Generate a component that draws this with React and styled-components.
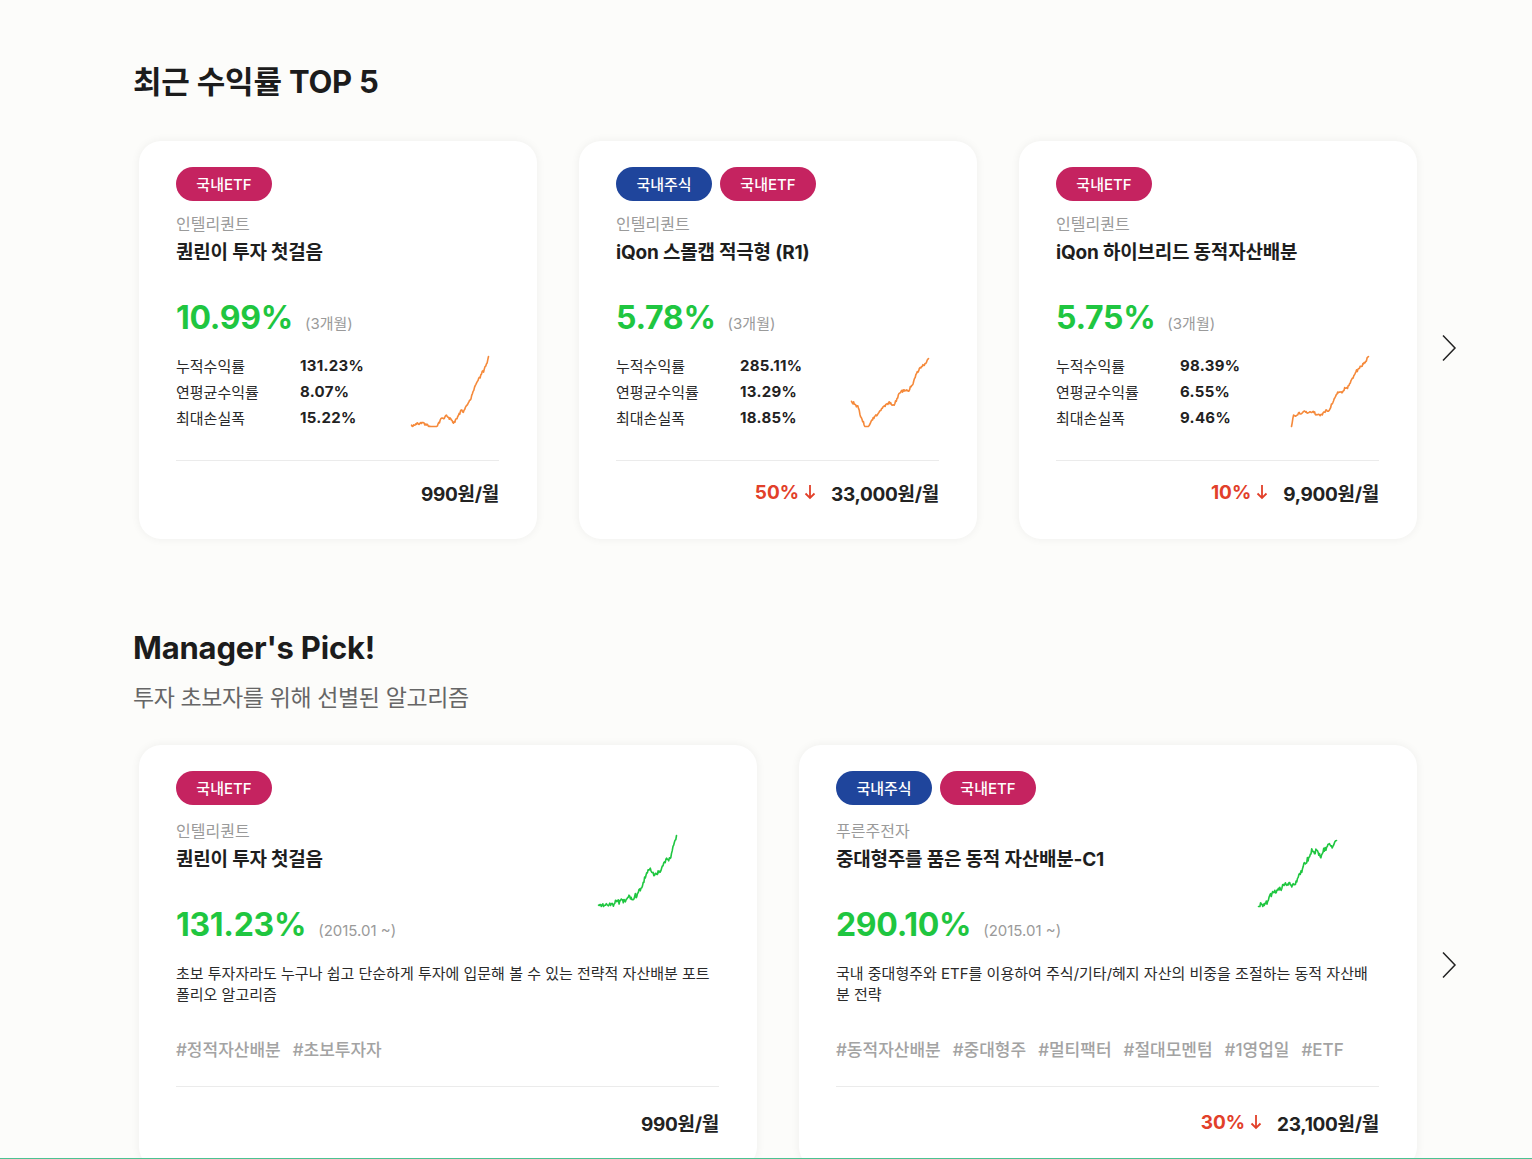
import React from 'react';
import styled, { createGlobalStyle } from 'styled-components';

const GREEN = '#1fc640';
const ORANGE = '#f5893a';
const RED = '#e2402a';

const GlobalStyle = createGlobalStyle`
  body {
    margin: 0;
    background: #fcfcfa;
    font-family: Inter, "Noto Sans CJK KR", sans-serif;
    color: #222;
  }
`;

const Page = styled.main`
  padding: 64px 0 0 133px;
`;

const SectionTitle = styled.h2`
  margin: ${(p) => p.$top || 0}px 0 0;
  font-size: 31px;
  line-height: 36px;
  font-weight: 700;
  color: #1c1c1c;
  letter-spacing: -0.2px;
`;

const SectionSub = styled.p`
  margin: 17px 0 0;
  font-size: 23px;
  line-height: 30px;
  color: #666;
  letter-spacing: -0.4px;
`;

const CarouselRow = styled.div`
  display: flex;
  align-items: center;
  margin-top: ${(p) => p.$top}px;
  padding-left: 6px;
`;

const CardList = styled.div`
  display: flex;
  gap: 42px;
`;

const Card = styled.div`
  box-sizing: border-box;
  width: ${(p) => p.$width}px;
  background: #fff;
  border-radius: 22px;
  box-shadow: 0 0 10px rgba(0, 0, 0, 0.06);
  padding: 26px 38px 33px 37px;
  display: flex;
  flex-direction: column;
`;

const NextButton = styled.button`
  margin: 16px 0 0 24px;
  padding: 0;
  border: 0;
  background: none;
  width: 16px;
  height: 28px;
  display: flex;
  cursor: pointer;
`;

const BadgeRow = styled.div`
  display: flex;
  gap: 8px;
`;

const Badge = styled.span`
  box-sizing: border-box;
  width: 96px;
  height: 34px;
  padding-bottom: 2px;
  border-radius: 17px;
  background: ${(p) => (p.$kind === 'stock' ? '#1f459c' : '#c52360')};
  color: #fff;
  font-size: 15px;
  font-weight: 500;
  display: flex;
  align-items: center;
  justify-content: center;
`;

const Company = styled.div`
  margin-top: ${(p) => p.$top || 12}px;
  font-size: 16px;
  line-height: 22px;
  color: #9a9a9a;
`;

const Title = styled.div`
  margin-top: 5px;
  font-size: 19px;
  line-height: 26px;
  font-weight: 700;
  color: #1e1e1e;
  letter-spacing: -0.2px;
`;

const ReturnLine = styled.div`
  margin-top: 32px;
  display: flex;
  align-items: baseline;
  gap: 12px;
`;

const Rate = styled.span`
  font-size: 32px;
  line-height: 40px;
  font-weight: 700;
  color: ${GREEN};
  letter-spacing: -0.3px;
`;

const Period = styled.span`
  font-size: 15px;
  color: #9a9a9a;
`;

const StatsRow = styled.div`
  margin-top: 14px;
  display: flex;
  justify-content: space-between;
  align-items: flex-end;
`;

const StatsTable = styled.div`
  display: grid;
  grid-template-columns: 124px auto;
  grid-auto-rows: 26px;
  align-items: center;
`;

const StatLabel = styled.span`
  font-size: 15px;
  color: #2a2a2a;
`;

const StatValue = styled.span`
  font-size: 15px;
  font-weight: 700;
  color: #222;
  letter-spacing: 0.3px;
`;

const ChartBox = styled.svg`
  display: block;
  flex: none;
  margin: ${(p) => p.$margin};
`;

const Divider = styled.div`
  margin-top: ${(p) => p.$top}px;
  height: 1px;
  background: #ebebeb;
`;

const PriceRow = styled.div`
  margin-top: ${(p) => p.$top}px;
  display: flex;
  justify-content: flex-end;
  align-items: center;
  gap: 15px;
  height: 28px;
`;

const Discount = styled.span`
  display: flex;
  align-items: center;
  gap: 5px;
  font-size: 19px;
  font-weight: 700;
  color: ${RED};
`;

const Price = styled.span`
  font-size: 19px;
  font-weight: 700;
  color: #222;
  letter-spacing: -0.3px;
`;

const HeaderRow = styled.div`
  display: flex;
  justify-content: space-between;
  align-items: flex-start;
`;

const HeaderText = styled.div`
  display: flex;
  flex-direction: column;
`;

const Description = styled.p`
  margin: 18px 0 0;
  font-size: 15px;
  line-height: 21px;
  color: #2a2a2a;
  word-break: break-all;
`;

const TagRow = styled.div`
  margin-top: 34px;
  display: flex;
  gap: 12px;
  font-size: 17px;
  line-height: 22px;
  color: #a3a3a3;
  font-weight: 500;
`;

const FooterLine = styled.div`
  position: fixed;
  left: 0;
  right: 0;
  bottom: 0;
  height: 1px;
  background: #4cc392;
`;

// seeded random walk bent through anchor points
const seeded = (s) => () => {
  s = (s * 16807) % 2147483647;
  return (s - 1) / 2147483646;
};

function buildPath(anchors, seed, w, h, amp, jitter, n = 110) {
  const r = seeded(seed);
  const walk = [0];
  for (let i = 1; i <= n; i++) walk.push(walk[i - 1] + (r() - 0.5) * amp);
  const pad = 1.5;
  const pts = [];
  for (let i = 0; i <= n; i++) {
    const t = i / n;
    let k = 0;
    while (k < anchors.length - 2 && anchors[k + 1][0] < t) k++;
    const [t0, v0] = anchors[k];
    const [t1, v1] = anchors[k + 1];
    const base = v0 + (v1 - v0) * ((t - t0) / (t1 - t0));
    const edge = i === 0 || i === n ? 0 : 1;
    const v = base + (walk[i] - walk[n] * t) * edge + (r() - 0.5) * jitter * edge;
    const y = pad + (1 - Math.min(1, Math.max(0, v))) * (h - pad * 2);
    pts.push(`${(pad + t * (w - pad * 2)).toFixed(1)},${y.toFixed(1)}`);
  }
  return 'M' + pts.join(' L');
}

const Chart = ({ anchors, seed, color, width, height, margin, amp = 0.035, jitter = 0.03 }) => (
  <ChartBox width={width} height={height} viewBox={`0 0 ${width} ${height}`} $margin={margin}>
    <path
      d={buildPath(anchors, seed, width, height, amp, jitter)}
      fill="none"
      stroke={color}
      strokeWidth="1.6"
      strokeLinejoin="round"
      strokeLinecap="round"
    />
  </ChartBox>
);

const Chevron = () => (
  <NextButton aria-label="next">
    <svg width="16" height="28" viewBox="0 0 16 28">
      <path d="M2 1.5 L14 14 L2 26.5" fill="none" stroke="#222" strokeWidth="1.5" />
    </svg>
  </NextButton>
);

const topFive = [
  {
    badges: ['etf'],
    company: '인텔리퀀트',
    title: '퀀린이 투자 첫걸음',
    rate: '10.99%',
    stats: ['131.23%', '8.07%', '15.22%'],
    price: '990원/월',
    seed: 11,
    anchors: [[0, 0.02], [0.12, 0.12], [0.22, 0.1], [0.3, 0.05], [0.38, 0.22], [0.48, 0.2], [0.55, 0.1], [0.68, 0.25], [0.8, 0.55], [0.88, 0.72], [0.97, 0.88], [1, 1]],
  },
  {
    badges: ['stock', 'etf'],
    company: '인텔리퀀트',
    title: 'iQon 스몰캡 적극형 (R1)',
    rate: '5.78%',
    stats: ['285.11%', '13.29%', '18.85%'],
    price: '33,000원/월',
    discount: '50%',
    seed: 29,
    anchors: [[0, 0.36], [0.08, 0.28], [0.2, 0.02], [0.3, 0.22], [0.45, 0.34], [0.55, 0.28], [0.65, 0.5], [0.75, 0.55], [0.85, 0.78], [0.95, 0.9], [1, 0.97]],
  },
  {
    badges: ['etf'],
    company: '인텔리퀀트',
    title: 'iQon 하이브리드 동적자산배분',
    rate: '5.75%',
    stats: ['98.39%', '6.55%', '9.46%'],
    price: '9,900원/월',
    discount: '10%',
    seed: 47,
    anchors: [[0, 0], [0.02, 0.18], [0.2, 0.3], [0.35, 0.2], [0.5, 0.3], [0.6, 0.5], [0.75, 0.62], [0.85, 0.8], [0.97, 0.92], [1, 1]],
  },
];

const picks = [
  {
    badges: ['etf'],
    company: '인텔리퀀트',
    title: '퀀린이 투자 첫걸음',
    rate: '131.23%',
    desc: '초보 투자자라도 누구나 쉽고 단순하게 투자에 입문해 볼 수 있는 전략적 자산배분 포트폴리오 알고리즘',
    tags: ['#정적자산배분', '#초보투자자'],
    price: '990원/월',
    seed: 5,
    anchors: [[0, 0.02], [0.2, 0.1], [0.3, 0.16], [0.42, 0.14], [0.55, 0.3], [0.65, 0.55], [0.72, 0.42], [0.8, 0.52], [0.92, 0.7], [1, 1]],
  },
  {
    badges: ['stock', 'etf'],
    company: '푸른주전자',
    title: '중대형주를 품은 동적 자산배분-C1',
    rate: '290.10%',
    desc: '국내 중대형주와 ETF를 이용하여 주식/기타/헤지 자산의 비중을 조절하는 동적 자산배분 전략',
    tags: ['#동적자산배분', '#중대형주', '#멀티팩터', '#절대모멘텀', '#1영업일', '#ETF'],
    price: '23,100원/월',
    discount: '30%',
    seed: 83,
    anchors: [[0, 0], [0.15, 0.12], [0.35, 0.28], [0.5, 0.34], [0.6, 0.6], [0.65, 0.7], [0.8, 0.72], [0.9, 0.95], [0.95, 0.85], [1, 0.93]],
  },
];

const Badges = ({ list }) => (
  <BadgeRow>
    {list.map((b) => (
      <Badge key={b} $kind={b}>{b === 'stock' ? '국내주식' : '국내ETF'}</Badge>
    ))}
  </BadgeRow>
);

const PriceLine = ({ discount, price, top }) => (
  <PriceRow $top={top}>
    {discount && (
      <Discount>
        {discount}
        <svg width="12" height="16" viewBox="0 0 12 16">
          <path d="M6 1 V14 M1.5 9.5 L6 14 L10.5 9.5" fill="none" stroke={RED} strokeWidth="1.8" />
        </svg>
      </Discount>
    )}
    <Price>{price}</Price>
  </PriceRow>
);

const labels = ['누적수익률', '연평균수익률', '최대손실폭'];

const TopCard = ({ item }) => (
  <Card $width={398}>
    <Badges list={item.badges} />
    <Company>{item.company}</Company>
    <Title>{item.title}</Title>
    <ReturnLine>
      <Rate>{item.rate}</Rate>
      <Period>(3개월)</Period>
    </ReturnLine>
    <StatsRow>
      <StatsTable>
        {labels.map((l, i) => (
          <React.Fragment key={l}>
            <StatLabel>{l}</StatLabel>
            <StatValue>{item.stats[i]}</StatValue>
          </React.Fragment>
        ))}
      </StatsTable>
      <Chart anchors={item.anchors} seed={item.seed} color={ORANGE} width={80} height={73} margin="0 9px 2px 0" />
    </StatsRow>
    <Divider $top={30} />
    <PriceLine discount={item.discount} price={item.price} top={17} />
  </Card>
);

const PickCard = ({ item }) => (
  <Card $width={618}>
    <Badges list={item.badges} />
    <HeaderRow>
      <HeaderText>
        <Company $top={15}>{item.company}</Company>
        <Title>{item.title}</Title>
        <ReturnLine>
          <Rate>{item.rate}</Rate>
          <Period>(2015.01 ~)</Period>
        </ReturnLine>
      </HeaderText>
      <Chart
        anchors={item.anchors}
        seed={item.seed}
        color={GREEN}
        width={81}
        height={74}
        margin="29px 41px 0 0"
        amp={0.05}
        jitter={0.06}
      />
    </HeaderRow>
    <Description>{item.desc}</Description>
    <TagRow>
      {item.tags.map((t) => (
        <span key={t}>{t}</span>
      ))}
    </TagRow>
    <Divider $top={25} />
    <PriceLine discount={item.discount} price={item.price} top={21} />
  </Card>
);

const App = () => (
  <>
    <GlobalStyle />
    <Page>
      <SectionTitle>최근 수익률 TOP 5</SectionTitle>
      <CarouselRow $top={41}>
        <CardList>
          {topFive.map((item) => (
            <TopCard key={item.title} item={item} />
          ))}
        </CardList>
        <Chevron />
      </CarouselRow>

      <SectionTitle $top={91}>Manager's Pick!</SectionTitle>
      <SectionSub>투자 초보자를 위해 선별된 알고리즘</SectionSub>
      <CarouselRow $top={32}>
        <CardList>
          {picks.map((item) => (
            <PickCard key={item.title} item={item} />
          ))}
        </CardList>
        <Chevron />
      </CarouselRow>
    </Page>
    <FooterLine />
  </>
);

export default App;
